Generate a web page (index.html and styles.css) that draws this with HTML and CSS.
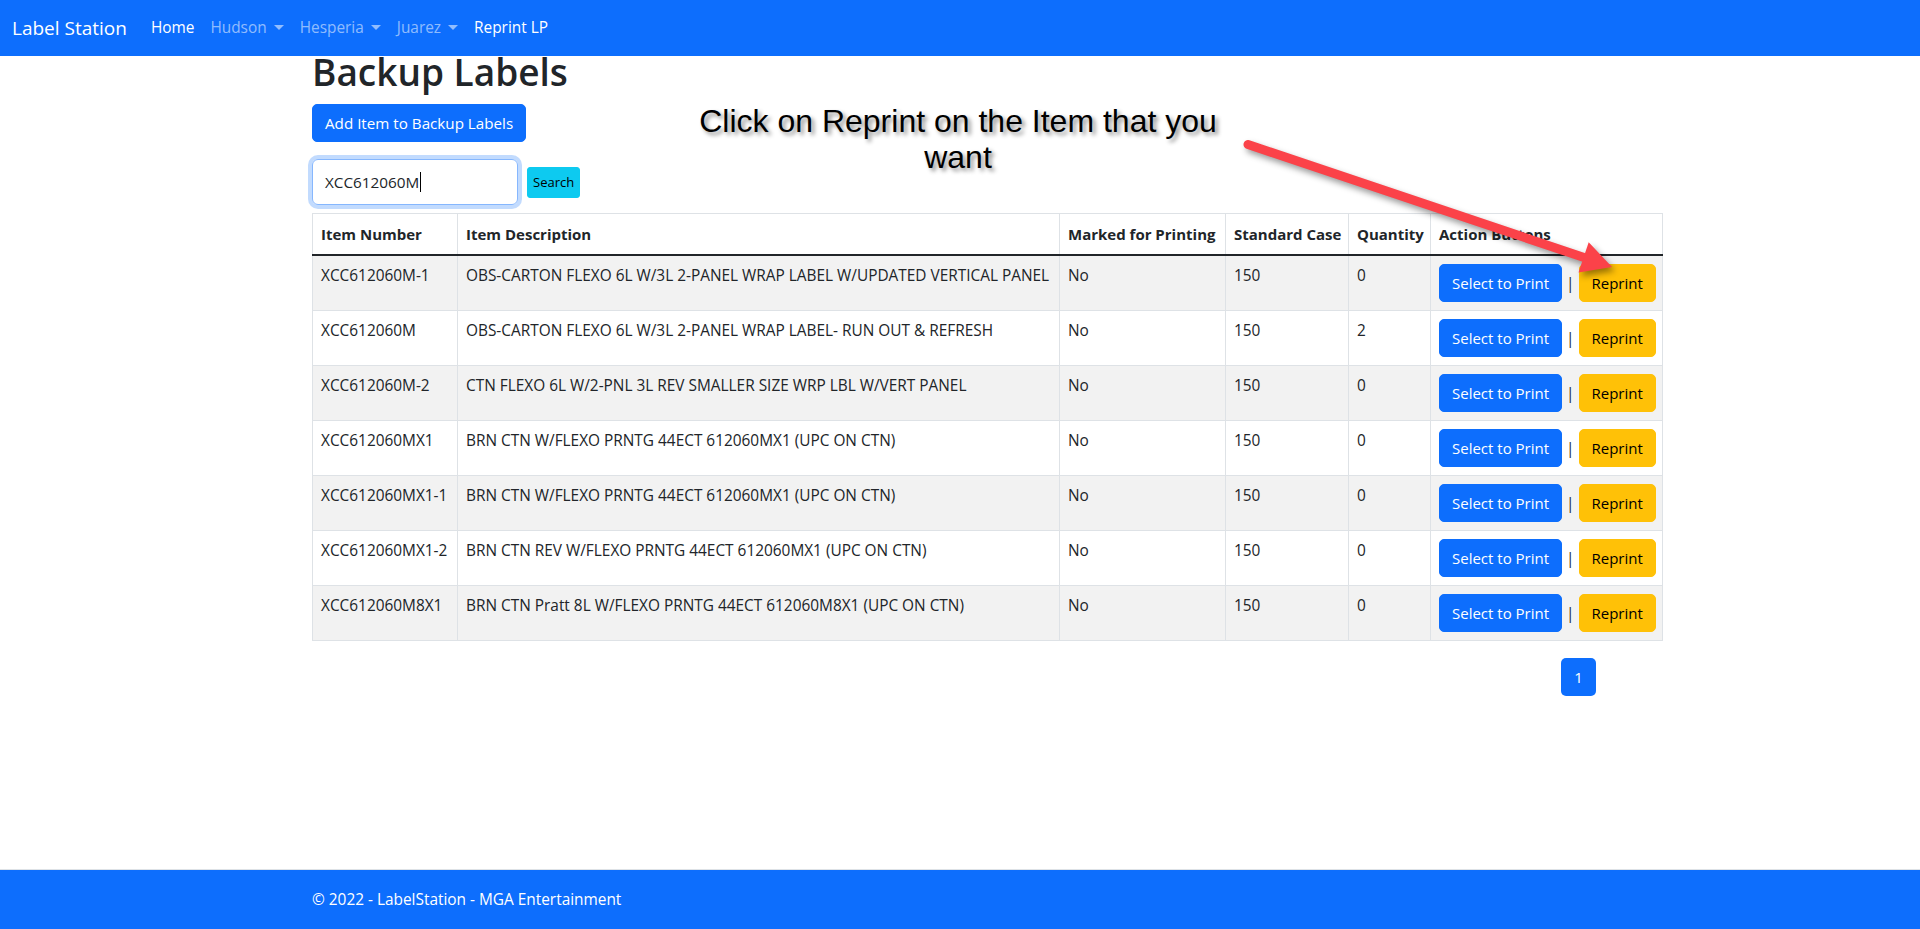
FILE: index.html
```html
<!DOCTYPE html>
<html lang="en">
<head>
<meta charset="utf-8">
<title>Backup Labels - LabelStation</title>
<link rel="stylesheet" href="styles.css">
</head>
<body>
<header class="navbar">
  <a class="brand" href="#">Label Station</a>
  <ul class="nav">
    <li><a class="nav-link active" href="#">Home</a></li>
    <li><a class="nav-link dropdown" href="#">Hudson</a></li>
    <li><a class="nav-link dropdown" href="#">Hesperia</a></li>
    <li><a class="nav-link dropdown" href="#">Juarez</a></li>
    <li><a class="nav-link active" href="#">Reprint LP</a></li>
  </ul>
</header>

<main class="container">
  <h1 class="title">Backup Labels</h1>
  <div><button class="btn btn-primary">Add Item to Backup Labels</button></div>
  <form class="search">
    <div class="form-control focused">XCC612060M<span class="caret"></span></div>
    <button type="button" class="btn btn-info btn-sm">Search</button>
  </form>

  <table class="table">
    <colgroup>
      <col class="c1"><col class="c2"><col class="c3"><col class="c4"><col class="c5"><col class="c6">
    </colgroup>
    <thead>
      <tr>
        <th>Item Number</th>
        <th>Item Description</th>
        <th>Marked for Printing</th>
        <th>Standard Case</th>
        <th>Quantity</th>
        <th>Action Buttons</th>
      </tr>
    </thead>
    <tbody>
      <tr>
        <td>XCC612060M-1</td>
        <td>OBS-CARTON FLEXO 6L W/3L 2-PANEL WRAP LABEL W/UPDATED VERTICAL PANEL</td>
        <td>No</td><td>150</td><td>0</td>
        <td><button class="btn btn-primary">Select to Print</button> | <button class="btn btn-warning">Reprint</button></td>
      </tr>
      <tr>
        <td>XCC612060M</td>
        <td>OBS-CARTON FLEXO 6L W/3L 2-PANEL WRAP LABEL- RUN OUT &amp; REFRESH</td>
        <td>No</td><td>150</td><td>2</td>
        <td><button class="btn btn-primary">Select to Print</button> | <button class="btn btn-warning">Reprint</button></td>
      </tr>
      <tr>
        <td>XCC612060M-2</td>
        <td>CTN FLEXO 6L W/2-PNL 3L REV SMALLER SIZE WRP LBL W/VERT PANEL</td>
        <td>No</td><td>150</td><td>0</td>
        <td><button class="btn btn-primary">Select to Print</button> | <button class="btn btn-warning">Reprint</button></td>
      </tr>
      <tr>
        <td>XCC612060MX1</td>
        <td>BRN CTN W/FLEXO PRNTG 44ECT 612060MX1 (UPC ON CTN)</td>
        <td>No</td><td>150</td><td>0</td>
        <td><button class="btn btn-primary">Select to Print</button> | <button class="btn btn-warning">Reprint</button></td>
      </tr>
      <tr>
        <td>XCC612060MX1-1</td>
        <td>BRN CTN W/FLEXO PRNTG 44ECT 612060MX1 (UPC ON CTN)</td>
        <td>No</td><td>150</td><td>0</td>
        <td><button class="btn btn-primary">Select to Print</button> | <button class="btn btn-warning">Reprint</button></td>
      </tr>
      <tr>
        <td>XCC612060MX1-2</td>
        <td>BRN CTN REV W/FLEXO PRNTG 44ECT 612060MX1 (UPC ON CTN)</td>
        <td>No</td><td>150</td><td>0</td>
        <td><button class="btn btn-primary">Select to Print</button> | <button class="btn btn-warning">Reprint</button></td>
      </tr>
      <tr>
        <td>XCC612060M8X1</td>
        <td>BRN CTN Pratt 8L W/FLEXO PRNTG 44ECT 612060M8X1 (UPC ON CTN)</td>
        <td>No</td><td>150</td><td>0</td>
        <td><button class="btn btn-primary">Select to Print</button> | <button class="btn btn-warning">Reprint</button></td>
      </tr>
    </tbody>
  </table>

  <nav class="pager"><span class="page-link">1</span></nav>
</main>

<footer class="footer">
  <div class="container">© 2022 - LabelStation - MGA Entertainment</div>
</footer>

<div class="callout">Click on Reprint on the Item that you<br>want</div>
<svg class="arrow" width="1920" height="929" viewBox="0 0 1920 929">
  <g class="arrow-g">
    <line x1="1248" y1="144.5" x2="1590" y2="259.5" stroke="#fb4249" stroke-width="9" stroke-linecap="round"/>
    <polygon points="1588.7,242.2 1612,267 1578.5,272.6" fill="#fb4249"/>
  </g>
</svg>
</body>
</html>
```

FILE: styles.css
```css
* { box-sizing: border-box; }

html, body { height: 100%; }

body {
  margin: 0;
  min-height: 100vh;
  display: flex;
  flex-direction: column;
  font-family: "Open Sans", "Noto Sans", sans-serif;
  font-size: 16px;
  line-height: 1.5;
  color: #212529;
  background: #fff;
  position: relative;
}

/* Navbar */
.navbar {
  height: 56px;
  background: #0d6efd;
  display: flex;
  align-items: center;
  padding: 8px 12px;
}
.brand {
  font-size: 19px;
  line-height: 30px;
  color: #fff;
  text-decoration: none;
  margin-right: 16px;
}
.nav {
  list-style: none;
  margin: 0;
  padding: 0;
  display: flex;
}
.nav-link {
  display: block;
  padding: 8px;
  color: rgba(255,255,255,.55);
  text-decoration: none;
  font-size: 15.4px;
}
.nav-link.active { color: #fff; }
.nav-link.dropdown::after {
  content: "";
  display: inline-block;
  margin-left: 7px;
  vertical-align: 3px;
  border-top: 5px solid;
  border-right: 5px solid transparent;
  border-left: 5px solid transparent;
}

/* Main */
.container {
  width: 1320px;
  margin: 0 auto;
  padding: 0 12px;
}
.title {
  margin: 0 0 16px;
  font-size: 37px;
  font-weight: 600;
  line-height: 32px;
}
.btn {
  display: inline-block;
  font-family: inherit;
  font-size: 15.2px;
  line-height: 24px;
  padding: 6px 12px;
  border: 1px solid transparent;
  border-radius: 5px;
  cursor: pointer;
  white-space: nowrap;
}
.btn-primary { background: #0d6efd; border-color: #0d6efd; color: #fff; }
.btn-warning { background: #ffc107; border-color: #ffc107; color: #000; }
.btn-info { background: #0dcaf0; border-color: #0dcaf0; color: #000; }
.btn-sm { font-size: 13px; line-height: 19px; padding: 5px 5px; border-radius: 3px; }

.search {
  display: flex;
  align-items: center;
  gap: 9px;
  margin: 17px 0 8px;
}
.form-control {
  width: 206px;
  height: 46px;
  padding: 10px 12px;
  border: 1px solid #ced4da;
  border-radius: 6px;
  font-size: 15.3px;
  line-height: 24px;
  display: flex;
  align-items: center;
}
.form-control.focused {
  border-color: #86b7fe;
  box-shadow: 0 0 0 4px rgba(13,110,253,.25);
}
.caret {
  display: inline-block;
  width: 1px;
  height: 20px;
  background: #000;
  margin-left: 1px;
}

/* Table */
.table {
  border-collapse: collapse;
  table-layout: fixed;
  width: 1350px;
  white-space: nowrap;
  font-size: 15.4px;
  border: 1px solid #dee2e6;
  vertical-align: top;
}
.c1 { width: 145px; }
.c2 { width: 602px; }
.c3 { width: 166px; }
.c4 { width: 123px; }
.c5 { width: 82px; }
.c6 { width: 232px; }
.table th, .table td {
  padding: 8px;
  border: 1px solid #dee2e6;
  text-align: left;
  vertical-align: top;
  line-height: 24px;
  overflow: hidden;
}
.table th { font-weight: 700; font-size: 15px; }
.table td .btn { font-size: 15px; }
.table thead th { border-bottom: 2px solid #212529; }
.table tbody tr:nth-child(odd) td { background: #f2f2f2; }

.pager {
  display: flex;
  justify-content: flex-end;
  padding-right: 12px;
  margin-top: 17px;
}
.page-link {
  display: block;
  width: 35px;
  height: 38px;
  line-height: 38px;
  text-align: center;
  background: #0d6efd;
  color: #fff;
  border-radius: 5px;
  font-size: 15px;
}

/* Footer */
.footer {
  margin-top: auto;
  height: 60px;
  line-height: 59px;
  background: #0d6efd;
  border-top: 1px solid #dee2e6;
  color: #fff;
  font-size: 15.4px;
  white-space: nowrap;
}

/* Annotation overlay */
.callout {
  position: absolute;
  left: 658px;
  top: 103px;
  width: 600px;
  text-align: center;
  font-family: "Liberation Sans", Arial, sans-serif;
  font-size: 32px;
  line-height: 36px;
  color: #000;
  text-shadow: 3px 3px 4px rgba(0,0,0,.45);
}
.arrow {
  position: absolute;
  left: 0;
  top: 0;
  pointer-events: none;
}
.arrow-g { filter: drop-shadow(3px 4px 3px rgba(0,0,0,.4)); }
```
